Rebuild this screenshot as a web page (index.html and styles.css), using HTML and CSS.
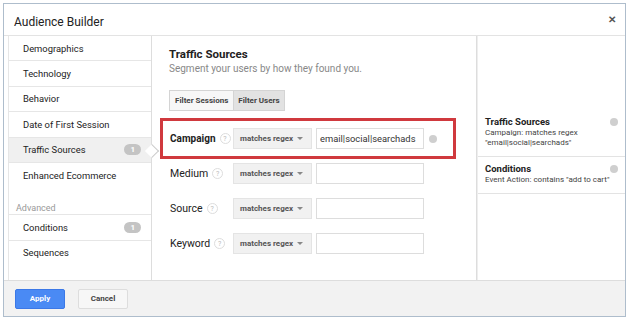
FILE: index.html
```html
<!DOCTYPE html>
<html lang="en">
<head>
    <meta charset="UTF-8">
    <title>Audience Builder</title>
    <link rel="stylesheet" href="styles.css">
</head>
<body>
    <div class="dialog">
        <div class="dialog-header">
            <span class="dialog-title">Audience Builder</span>
            <span class="close">&#x2715;</span>
        </div>

        <div class="dialog-body">
            <ul class="nav">
                <li class="nav-item">Demographics</li>
                <li class="nav-item">Technology</li>
                <li class="nav-item">Behavior</li>
                <li class="nav-item">Date of First Session</li>
                <li class="nav-item active">Traffic Sources <span class="count">1</span></li>
                <li class="nav-item last">Enhanced Ecommerce</li>
                <li class="nav-group">Advanced</li>
                <li class="nav-item">Conditions <span class="count">1</span></li>
                <li class="nav-item last">Sequences</li>
            </ul>

            <div class="editor">
                <h2>Traffic Sources</h2>
                <p class="sub">Segment your users by how they found you.</p>

                <div class="toggle">
                    <button class="toggle-btn">Filter Sessions</button>
                    <button class="toggle-btn on">Filter Users</button>
                </div>

                <div class="rows">
                    <div class="row highlight">
                        <label class="bold">Campaign <span class="help">?</span></label>
                        <div class="select">matches regex <span class="caret"></span></div>
                        <input class="value" type="text" value="email|social|searchads">
                        <span class="clear"></span>
                    </div>
                    <div class="row">
                        <label>Medium <span class="help">?</span></label>
                        <div class="select">matches regex <span class="caret"></span></div>
                        <input class="value" type="text">
                    </div>
                    <div class="row">
                        <label>Source <span class="help">?</span></label>
                        <div class="select">matches regex <span class="caret"></span></div>
                        <input class="value" type="text">
                    </div>
                    <div class="row">
                        <label>Keyword <span class="help">?</span></label>
                        <div class="select">matches regex <span class="caret"></span></div>
                        <input class="value" type="text">
                    </div>
                </div>
            </div>

            <div class="summary">
                <div class="summary-item">
                    <div class="summary-title">Traffic Sources</div>
                    <div class="summary-text">Campaign: matches regex<br>"email|social|searchads"</div>
                    <span class="remove"></span>
                </div>
                <div class="summary-item">
                    <div class="summary-title">Conditions</div>
                    <div class="summary-text">Event Action: contains "add to cart"</div>
                    <span class="remove"></span>
                </div>
            </div>
        </div>

        <div class="dialog-footer">
            <button class="btn primary">Apply</button>
            <button class="btn">Cancel</button>
        </div>
    </div>
</body>
</html>
```

FILE: styles.css
```css
body {
    margin: 0;
    background: #fff;
    font-family: Roboto, "Liberation Sans", Arial, sans-serif;
    color: #333;
}
.dialog {
    margin: 3px;
    width: 621px;
    height: 312px;
    border: 1px solid #aebdcc;
    display: flex;
    flex-direction: column;
    background: #fff;
}
.dialog-header {
    height: 31px;
    border-bottom: 1px solid #e3e3e3;
    display: flex;
    align-items: center;
    justify-content: space-between;
    padding: 0 9px 0 10px;
}
.dialog-title {
    font-size: 12px;
    color: #222;
    padding-top: 4px;
}
.close {
    font-size: 10px;
    font-weight: bold;
    color: #555;
}
.dialog-body {
    flex: 1;
    display: flex;
    padding-left: 4px;
    min-height: 0;
}

/* left nav */
.nav {
    list-style: none;
    margin: 0;
    padding: 0;
    width: 142px;
    border-right: 1px solid #ddd;
    border-left: 1px solid #e6e6e6;
}
.nav-item {
    height: 24.4px;
    border-bottom: 1px solid #e6e6e6;
    display: flex;
    align-items: center;
    justify-content: space-between;
    padding: 0 10px 0 14px;
    font-size: 9.4px;
    color: #222;
    position: relative;
}
.nav-item.last {
    border-bottom: none;
}
.nav-item.active {
    background: #f0f0f0;
}
.nav-item.active::after {
    content: "";
    position: absolute;
    right: -6px;
    top: 8px;
    width: 9px;
    height: 9px;
    background: #fff;
    border-top: 1px solid #ccc;
    border-right: 1px solid #ccc;
    transform: rotate(45deg);
}
.nav-group {
    padding: 16px 0 1px 7px;
    font-size: 9px;
    color: #999;
    border-bottom: 1px solid #e6e6e6;
}
.count {
    background: #c4c4c4;
    color: #fff;
    font-size: 8px;
    font-weight: bold;
    border-radius: 6px;
    padding: 1px 6px;
    line-height: 9px;
}

/* middle editor */
.editor {
    width: 325px;
    border-right: 1px solid #ddd;
    padding: 11px 0 0 17px;
    box-sizing: border-box;
}
.editor h2 {
    margin: 0;
    font-size: 11.5px;
    font-weight: bold;
    color: #222;
}
.sub {
    margin: 2px 0 0;
    font-size: 10px;
    color: #888;
}
.toggle {
    display: flex;
    margin-top: 16px;
}
.toggle-btn {
    height: 21px;
    border: 1px solid #d4d4d4;
    background: #f7f7f7;
    font-family: inherit;
    font-size: 8px;
    font-weight: bold;
    color: #444;
    padding: 0 5px;
    margin: 0;
}
.toggle-btn.on {
    background: #e2e2e2;
    border-left: none;
    padding: 0 4px;
}
.rows {
    margin: 7px 0 0 -9px;
}
.row {
    display: flex;
    align-items: center;
    height: 35px;
    padding-left: 10px;
    width: 296px;
    box-sizing: border-box;
}
.row.highlight {
    height: 41px;
    border: 3px solid #d0393e;
    padding-left: 7px;
    margin-bottom: -3px;
}
.row label {
    width: 63px;
    font-size: 10.5px;
    color: #222;
    display: flex;
    align-items: center;
    gap: 4px;
}
.row label.bold {
    font-weight: bold;
    font-size: 10px;
}
.help {
    width: 9px;
    height: 9px;
    border: 1px solid #ddd;
    border-radius: 50%;
    font-size: 7px;
    color: #bbb;
    font-weight: normal;
    display: inline-flex;
    align-items: center;
    justify-content: center;
}
.select {
    width: 79px;
    height: 21px;
    background: #f1f1f1;
    border: 1px solid #e4e4e4;
    box-sizing: border-box;
    font-size: 8px;
    font-weight: bold;
    color: #555;
    display: flex;
    align-items: center;
    justify-content: space-between;
    padding: 0 8px 0 6px;
}
.caret {
    border-left: 3px solid transparent;
    border-right: 3px solid transparent;
    border-top: 3px solid #888;
}
.value {
    width: 108px;
    height: 21px;
    box-sizing: border-box;
    margin: 0 0 0 4px;
    border: 1px solid #ddd;
    padding: 0 3px;
    font-family: inherit;
    font-size: 9.4px;
    color: #333;
}
.clear,
.remove {
    width: 8px;
    height: 8px;
    border-radius: 50%;
    background: #cfcfcf;
    margin-left: 5px;
}

/* right summary */
.summary {
    flex: 1;
    padding-top: 74px;
    border-left: 1px solid #eee;
}
.summary-item {
    position: relative;
    padding: 6px 10px 8px 7px;
    border-bottom: 1px solid #e3e3e3;
}
.summary-title {
    font-size: 9.5px;
    line-height: 12px;
    font-weight: bold;
    color: #222;
}
.summary-text {
    font-size: 8px;
    color: #444;
    line-height: 10px;
}
.remove {
    position: absolute;
    right: 7px;
    top: 8px;
}

/* footer */
.dialog-footer {
    height: 35px;
    background: #f2f2f2;
    border-top: 1px solid #ddd;
    display: flex;
    align-items: center;
    gap: 13px;
    padding-left: 11px;
}
.btn {
    width: 50px;
    height: 20px;
    font-family: inherit;
    font-size: 8px;
    font-weight: bold;
    color: #444;
    background: #f7f7f7;
    border: 1px solid #ddd;
    border-radius: 2px;
}
.btn.primary {
    background: #4a8af4;
    border-color: #3b78e7;
    color: #fff;
}
```
